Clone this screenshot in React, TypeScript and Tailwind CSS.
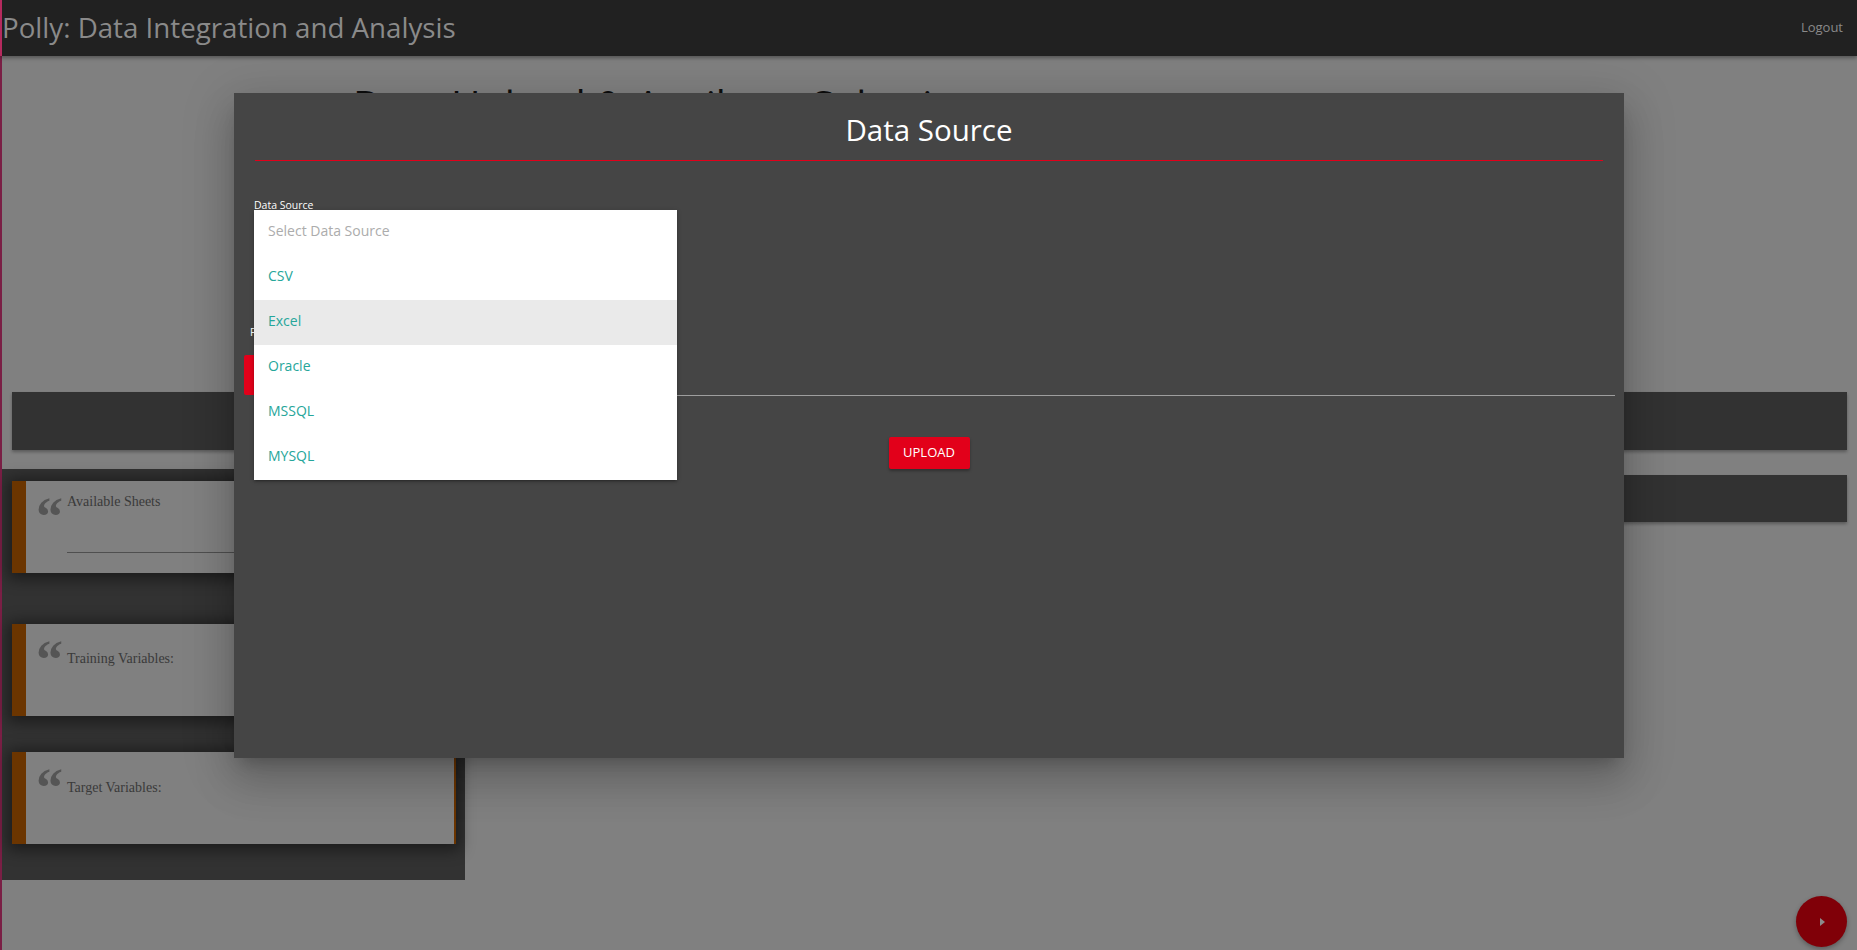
const sources = ["CSV", "Excel", "Oracle", "MSSQL", "MYSQL"]

function QuoteMark() {
  return (
    <div className="w-[41px] shrink-0 pl-[10px]">
      <span className="mt-[9px] block h-[30px] font-['Liberation_Serif',serif] text-[54px] font-bold leading-none text-[#555555]">
        &ldquo;
      </span>
    </div>
  )
}

function InfoCard({ label, textTop, underline }: { label: string; textTop: string; underline?: boolean }) {
  return (
    <div className="flex h-[92px] border-l-[14px] border-r-2 border-[#6b3500] bg-[#808080] shadow-[0_2px_14px_4px_rgba(0,0,0,0.45)]">
      <QuoteMark />
      <div className={`flex-1 pr-[20px] ${textTop}`}>
        <p className="font-['Liberation_Serif',serif] text-[14px] leading-[14px] text-[#3a3a3a]">{label}</p>
        {underline && <div className="mt-[43px] h-px bg-[#4f4f4f]" />}
      </div>
    </div>
  )
}

export default function App() {
  return (
    <div className="relative h-screen w-full overflow-hidden bg-[#808080] font-['Open_Sans','Noto_Sans',sans-serif]">
      <header className="relative z-10 flex h-[56px] items-center justify-between border-l-2 border-[#b52a5e] bg-[#212121] pr-[14px] shadow-[0_2px_4px_rgba(0,0,0,0.35)]">
        <h1 className="text-[27.7px] leading-none text-[#8a8a8a]">Polly: Data Integration and Analysis</h1>
        <span className="text-[13px] text-[#8a8a8a]">Logout</span>
      </header>

      <main className="flex h-[894px] flex-col border-l-2 border-[#7a1f45]">
        <h2 className="ml-[351px] mt-[29px] text-[40px] leading-none text-[#0d0d0d]">
          Data Upload &amp; Attribute Selection
        </h2>

        <div className="mx-[10px] mt-[267px] h-[58px] bg-[#323232] shadow-[0_2px_3px_rgba(0,0,0,0.3)]" />

        <div className="mt-[19px] flex gap-[13px]">
          <aside className="w-[463px] bg-[#323232] pb-[36px] pl-[10px] pr-[9px] pt-[12px]">
            <InfoCard label="Available Sheets" textTop="pt-[14px]" underline />
            <div className="mt-[51px]">
              <InfoCard label="Training Variables:" textTop="pt-[28px]" />
            </div>
            <div className="mt-[36px]">
              <InfoCard label="Target Variables:" textTop="pt-[29px]" />
            </div>
          </aside>
          <div className="mr-[10px] mt-[6px] h-[47px] flex-1 bg-[#323232] shadow-[0_2px_3px_rgba(0,0,0,0.3)]" />
        </div>
      </main>

      <button className="absolute bottom-[3px] right-[10px] flex h-[51px] w-[51px] items-center justify-center rounded-full bg-[#800008] shadow-[0_2px_5px_rgba(0,0,0,0.3)]">
        <svg width="5" height="8" viewBox="0 0 5 8" className="ml-[2px]">
          <polygon points="0,0 5,4 0,8" fill="#8c8c8c" />
        </svg>
      </button>

      <div className="absolute left-[234px] top-[93px] h-[665px] w-[1390px] bg-[#454545] shadow-[0_24px_38px_3px_rgba(0,0,0,0.14),0_9px_46px_8px_rgba(0,0,0,0.12),0_11px_15px_-7px_rgba(0,0,0,0.2)]">
        <h3 className="pt-[22px] text-center text-[29.5px] leading-[30px] text-white">Data Source</h3>
        <div className="mx-[21px] mt-[15px] h-px bg-[#e2001a]" />

        <div className="relative px-[20px] pt-[38px]">
          <label className="block text-[10.5px] leading-[12px] text-white">Data Source</label>
          <div className="h-[45px]" />

          <ul className="absolute left-[20px] top-[49px] w-[423px] bg-white shadow-[0_2px_2px_rgba(0,0,0,0.14),0_3px_1px_-2px_rgba(0,0,0,0.12),0_1px_5px_rgba(0,0,0,0.2)]">
            <li className="flex h-[45px] items-center px-[14px] pb-[5px] text-[14px] text-[#acacac]">Select Data Source</li>
            {sources.map((s) => (
              <li
                key={s}
                className={`flex h-[45px] items-center px-[14px] pb-[5px] text-[14px] text-[#26a69a] ${
                  s === "Excel" ? "bg-[#eaeaea]" : ""
                }`}
              >
                {s}
              </li>
            ))}
          </ul>
        </div>

        <label className="mt-[70px] block pl-[16px] text-[10.5px] leading-[12px] text-white">File</label>
        <div className="ml-[10px] mr-[9px] mt-[17px] flex items-start gap-[10px]">
          <div className="flex h-[40px] w-[84px] items-center justify-center rounded-[2px] bg-[#e2001a] text-[13px] text-white">
            FILE
          </div>
          <div className="h-[41px] flex-1 border-b border-[#9e9e9e]" />
        </div>

        <div className="mt-[41px] flex justify-center">
          <button className="h-[32px] w-[81px] rounded-[2px] bg-[#e2001a] text-[13px] text-white shadow-[0_2px_3px_rgba(0,0,0,0.3)]">
            UPLOAD
          </button>
        </div>
      </div>
    </div>
  )
}
